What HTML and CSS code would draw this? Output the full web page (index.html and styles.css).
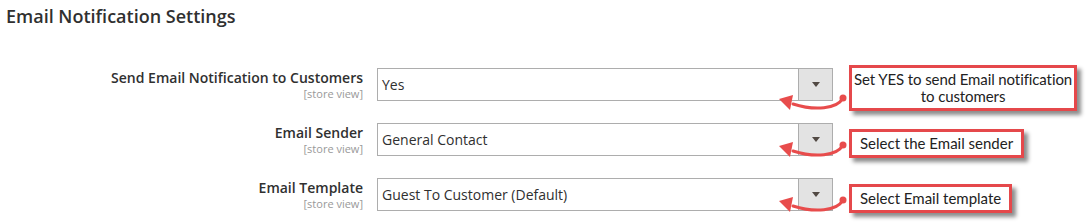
FILE: index.html
```html
<!DOCTYPE html>
<html>
<head>
    <title>Email Notification Settings</title>
    <meta charset="UTF-8">
    <link rel="stylesheet" href="styles.css">
</head>
<body>
    <div class="section">
        <h2 class="section-title">Email Notification Settings</h2>
        <div class="fields">
            <div class="field">
                <div class="label">
                    <span>Send Email Notification to Customers</span>
                    <span class="scope">[store view]</span>
                </div>
                <div class="select">
                    <span class="value">Yes</span>
                    <span class="select-btn"><i class="caret"></i></span>
                </div>
                <div class="note">
                    <div class="callout callout-wide">
                        Set YES to send Email notification<br>to customers
                        <svg class="arrow" viewBox="0 0 74 24" width="74" height="24">
                            <path d="M68 9 C62 20, 40 22, 18 15" fill="none" stroke="#e84c4c" stroke-width="3" stroke-linecap="round"/>
                            <polygon points="4,10 18,6 15,21" fill="#e84c4c"/>
                            <circle cx="68" cy="9" r="3.5" fill="#e84c4c"/>
                        </svg>
                    </div>
                </div>
            </div>
            <div class="field">
                <div class="label">
                    <span>Email Sender</span>
                    <span class="scope">[store view]</span>
                </div>
                <div class="select">
                    <span class="value">General Contact</span>
                    <span class="select-btn"><i class="caret"></i></span>
                </div>
                <div class="note">
                    <div class="callout">
                        Select the Email sender
                        <svg class="arrow" viewBox="0 0 74 24" width="74" height="24">
                            <path d="M68 9 C62 20, 40 22, 18 15" fill="none" stroke="#e84c4c" stroke-width="3" stroke-linecap="round"/>
                            <polygon points="4,10 18,6 15,21" fill="#e84c4c"/>
                            <circle cx="68" cy="9" r="3.5" fill="#e84c4c"/>
                        </svg>
                    </div>
                </div>
            </div>
            <div class="field">
                <div class="label">
                    <span>Email Template</span>
                    <span class="scope">[store view]</span>
                </div>
                <div class="select">
                    <span class="value">Guest To Customer (Default)</span>
                    <span class="select-btn"><i class="caret"></i></span>
                </div>
                <div class="note">
                    <div class="callout">
                        Select Email template
                        <svg class="arrow" viewBox="0 0 74 24" width="74" height="24">
                            <path d="M68 9 C62 20, 40 22, 18 15" fill="none" stroke="#e84c4c" stroke-width="3" stroke-linecap="round"/>
                            <polygon points="4,10 18,6 15,21" fill="#e84c4c"/>
                            <circle cx="68" cy="9" r="3.5" fill="#e84c4c"/>
                        </svg>
                    </div>
                </div>
            </div>
        </div>
    </div>
</body>
</html>
```

FILE: styles.css
```css
body {
    margin: 0;
    font-family: "Open Sans", sans-serif;
    color: #303030;
    background-color: #fff;
}
.section-title {
    margin: 0;
    padding: 4px 0 0 6px;
    font-size: 18px;
    font-weight: 600;
    line-height: 24px;
}
.fields {
    margin-top: 40px;
}
.field {
    display: grid;
    grid-template-columns: 363px 456px 1fr;
    column-gap: 14px;
    height: 33px;
    margin-bottom: 22px;
}
.label {
    display: flex;
    flex-direction: column;
    align-items: flex-end;
    font-size: 14px;
    font-weight: 600;
    line-height: 19px;
}
.scope {
    font-size: 11px;
    font-weight: 400;
    line-height: 13px;
    color: #999;
}
.select {
    box-sizing: border-box;
    display: flex;
    align-items: center;
    height: 33px;
    padding-left: 4px;
    border: 1px solid #adadad;
    font-size: 14px;
}
.select-btn {
    box-sizing: border-box;
    display: flex;
    align-items: center;
    justify-content: center;
    width: 34px;
    height: 100%;
    margin-left: auto;
    background-color: #e3e3e3;
    border-left: 1px solid #adadad;
}
.caret {
    width: 0;
    height: 0;
    border-left: 4px solid transparent;
    border-right: 4px solid transparent;
    border-top: 5px solid #514943;
}
.note {
    display: flex;
    align-items: center;
    height: 33px;
    margin-left: 2px;
}
.callout {
    position: relative;
    margin-top: 7px;
    padding: 3px 8px;
    border: 3px solid #e5484b;
    background-color: #fff;
    box-shadow: 4px 4px 4px rgba(0,0,0,0.45);
    font-family: Lato, sans-serif;
    font-size: 15px;
    line-height: 17px;
    color: #222;
    text-align: center;
    white-space: nowrap;
}
.callout-wide {
    padding: 3px 2px;
    letter-spacing: -0.1px;
}
.arrow {
    position: absolute;
    right: calc(100% + 3px);
    bottom: -5px;
}
```
